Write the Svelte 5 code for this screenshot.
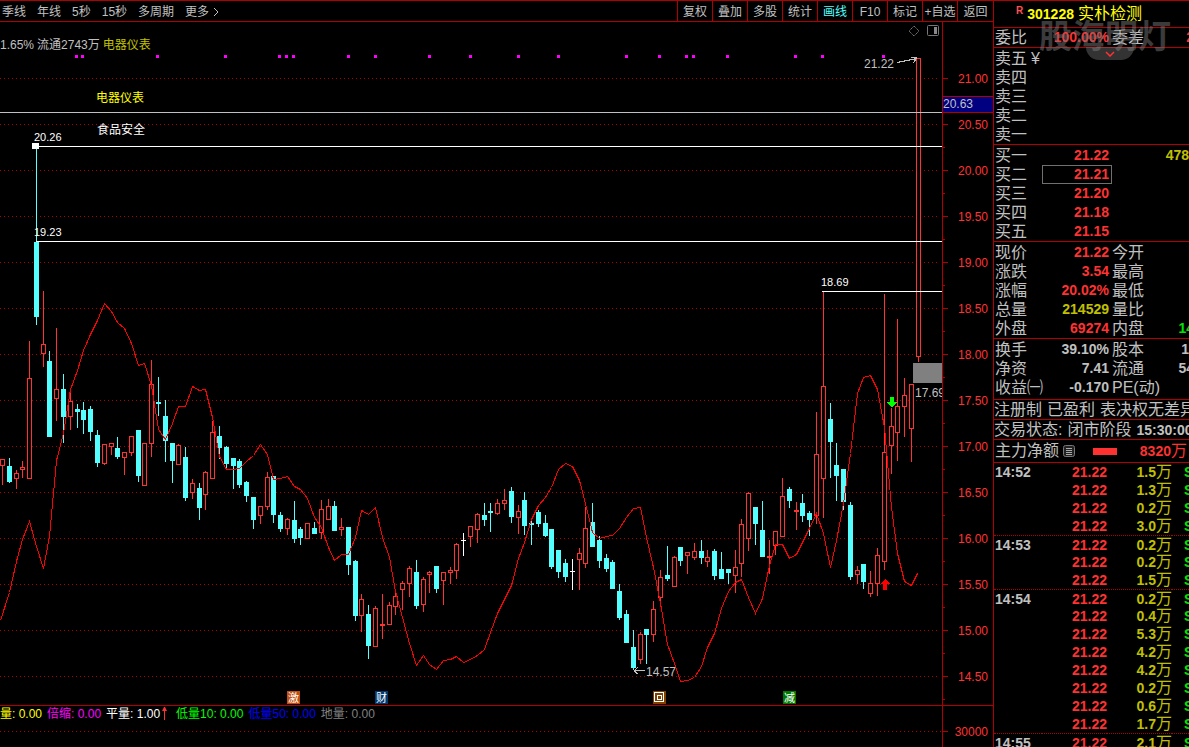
<script lang="ts">
  type Cell = { text: string; tone?: string; cut?: boolean; boxed?: boolean };
  type Row = { label: string; mark?: string; value?: Cell; label2?: string; value2?: Cell };

  const periods = ['季线', '年线', '5秒', '15秒', '多周期'];
  const tools = ['复权', '叠加', '多股', '统计', '画线', 'F10', '标记', '+自选', '返回'];
  let activeTool = $state('画线');

  const prices = Array.from({ length: 14 }, (_, i) => (21 - i * 0.5).toFixed(2));
  const gridY = prices.map((_, i) => 78 + i * 46);
  const dots = [75, 81, 156, 224, 278, 285, 292, 347, 374, 428, 469, 517, 557, 625, 658, 685, 692, 726, 794, 821, 882];

  // x, high, body top, body bottom, low, kind (u = up, d = down, w = flat)
  const candles = `
    2 459 459 466 485 u;9 458 466 482 483 d;16 470 473 479 489 u;22 461 467 470 478 u;29 341 378 479 479 u
    36 146 242 317 325 d;43 291 344 354 367 u;49 351 361 437 437 d;56 328 389 399 421 u;63 374 389 417 443 d
    70 393 401 417 430 u;77 404 409 412 428 d;83 402 410 420 434 d;90 406 409 432 441 d;97 430 435 463 467 d
    104 444 444 464 465 u;111 443 443 447 455 u;117 437 448 457 459 d;124 452 452 458 475 u;131 436 436 453 456 u
    138 430 430 476 482 d;144 443 443 486 486 u;151 360 384 444 457 u;158 377 402 404 416 d;165 400 416 441 462 d
    172 443 443 461 483 d;178 444 445 465 465 u;185 447 457 498 501 d;192 479 483 493 499 u;199 483 488 508 520 d
    205 471 472 495 510 u;212 421 432 479 479 u;219 426 436 448 459 d;226 446 447 464 469 d;233 458 458 466 489 d
    239 459 461 485 488 d;246 481 482 496 502 d;253 497 497 520 529 d;260 506 506 516 524 u;267 472 477 507 510 u
    273 476 476 515 523 d;280 512 515 529 532 d;287 518 519 529 535 u;294 501 520 539 543 d;300 527 529 538 545 d
    307 523 523 539 539 u;314 522 528 534 534 d;321 500 509 533 539 u;328 499 506 520 520 u;334 501 506 531 531 d
    341 518 527 530 536 u;348 527 527 565 575 d;355 560 561 616 621 d;361 594 599 616 632 u;368 605 614 646 659 d
    375 606 608 647 647 u;382 594 624 626 639 u;389 602 605 625 625 u;395 592 596 607 615 u;402 581 583 590 610 u
    409 566 568 584 597 u;416 560 572 606 609 d;423 577 579 605 612 u;429 571 572 575 593 u;436 566 566 589 593 d
    443 572 572 581 605 u;450 567 570 573 584 u;456 543 544 571 579 u;463 533 540 541 556 w;470 526 526 537 547 u
    477 513 514 530 543 u;484 503 515 520 526 d;490 503 511 513 532 d;497 499 503 514 515 u;504 489 500 504 510 u
    511 487 491 517 523 d;518 505 511 518 534 u;524 492 500 526 535 d;531 521 523 525 545 d;538 510 512 524 527 d
    545 515 523 536 537 d;551 529 529 567 569 d;558 550 550 572 578 d;565 559 563 577 582 d;572 559 571 572 590 w
    579 548 553 560 590 u;585 507 528 564 568 u;592 503 522 547 547 d;599 536 540 561 568 d;606 554 558 569 572 d
    612 560 562 589 589 d;619 584 591 618 620 d;626 610 614 643 643 d;633 630 647 668 670 d;640 632 634 660 664 u
    646 629 629 635 664 d;653 601 609 635 642 u;660 570 577 598 601 u;667 546 575 579 581 d;674 556 557 587 587 u
    680 547 547 561 566 d;687 552 552 556 574 u;694 543 551 558 560 u;701 540 551 558 564 d;707 550 557 562 567 u
    714 549 551 576 580 d;721 552 569 579 579 d;728 569 569 573 584 d;735 550 567 576 593 u;741 519 524 564 577 u
    748 492 493 539 551 u;755 507 507 524 545 d;762 501 530 557 557 d;769 540 556 558 574 u;775 531 531 546 555 u
    782 478 496 537 537 u;789 487 489 501 508 d;796 502 510 512 530 u;802 494 503 516 522 d;809 511 513 520 536 d
    816 412 454 516 524 u;823 292 386 479 518 u;830 403 419 442 478 d;836 443 465 476 501 d;843 469 469 502 510 d
    850 502 505 577 580 d;857 566 570 575 584 u;863 564 564 582 589 d;870 571 583 594 597 u;877 548 555 584 596 u
    884 294 452 562 570 u;891 408 426 446 474 u;897 319 406 433 461 u;904 378 395 407 437 u;911 384 384 429 462 u
    918 58 58 357 362 u`
    .trim()
    .split(/[;\n]/)
    .map((row) => {
      const [x, high, top, bottom, low, kind] = row.trim().split(' ');
      return { x: +x, high: +high, top: +top, bottom: +bottom, low: +low, kind };
    });

  const trend =
    '0,620 9,592 16,561 22,539 29,521 36,546 43,568 49,536 56,460 63,433 70,389 77,370 83,350 90,334 97,320 104,303 ' +
    '111,311 117,322 124,328 131,343 138,365 144,363 151,385 158,429 165,439 172,423 178,406 185,406 192,386 ' +
    '199,390 205,389 212,417 219,456 226,469 233,469 239,468 246,461 253,455 260,444 267,454 273,479 280,478 ' +
    '287,476 294,486 300,489 307,498 314,517 321,527 328,547 334,560 341,554 348,554 355,537 361,510 368,514 ' +
    '375,507 382,537 389,557 395,591 402,617 409,643 416,665 423,655 429,664 436,669 443,660 450,659 456,656 ' +
    '463,662 470,659 477,655 484,649 490,632 497,613 504,599 511,585 518,558 524,542 531,519 538,505 545,497 ' +
    '551,487 558,469 565,463 572,466 579,480 585,503 592,532 599,538 606,536 612,535 619,528 626,517 633,508 ' +
    '640,507 646,537 653,567 660,603 667,644 674,663 680,681 687,680 694,677 701,666 707,647 714,633 721,608 ' +
    '728,591 735,582 741,579 748,597 755,613 762,598 769,565 775,544 782,544 789,558 796,554 802,542 809,528 ' +
    '816,513 823,533 830,567 836,540 843,503 850,453 857,393 863,377 870,375 877,389 884,427 891,507 897,553 ' +
    '904,581 911,585 917,573';

  const events = [
    { x: 287, text: '激', fill: '#c05010' },
    { x: 375, text: '财', fill: '#003870' },
    { x: 653, text: '回', fill: '#804000' },
    { x: 783, text: '减', fill: '#007800' }
  ];

  const volumes = [
    { text: '量: 0.00', tone: 'bright' },
    { text: '倍缩: 0.00', tone: 'magenta' },
    { text: '平量: 1.00', tone: 'white', arrow: true },
    { text: '低量10: 0.00', tone: 'lime' },
    { text: '低量50: 0.00', tone: 'blue' },
    { text: '地量: 0.00', tone: 'dim' }
  ];

  const blocks: Row[][] = [
    [{ label: '委比', value: { text: '100.00%', tone: 'red' }, label2: '委差', value2: { text: '2', tone: 'red', cut: true } }],
    [{ label: '卖五', mark: '¥' }, { label: '卖四' }, { label: '卖三' }, { label: '卖二' }, { label: '卖一' }],
    [
      { label: '买一', value: { text: '21.22', tone: 'red' }, value2: { text: '478', tone: 'yellow' } },
      { label: '买二', value: { text: '21.21', tone: 'red', boxed: true } },
      { label: '买三', value: { text: '21.20', tone: 'red' } },
      { label: '买四', value: { text: '21.18', tone: 'red' } },
      { label: '买五', value: { text: '21.15', tone: 'red' } }
    ],
    [
      { label: '现价', value: { text: '21.22', tone: 'red' }, label2: '今开' },
      { label: '涨跌', value: { text: '3.54', tone: 'red' }, label2: '最高' },
      { label: '涨幅', value: { text: '20.02%', tone: 'red' }, label2: '最低' },
      { label: '总量', value: { text: '214529', tone: 'yellow' }, label2: '量比' },
      { label: '外盘', value: { text: '69274', tone: 'red' }, label2: '内盘', value2: { text: '14', tone: 'green', cut: true } }
    ],
    [
      { label: '换手', value: { text: '39.10%' }, label2: '股本', value2: { text: '1' } },
      { label: '净资', value: { text: '7.41' }, label2: '流通', value2: { text: '54', cut: true } },
      { label: '收益㈠', value: { text: '-0.170' }, label2: 'PE(动)' }
    ]
  ];

  const minutes = [
    { time: '14:52', trades: ['1.5', '1.3', '0.2', '3.0'] },
    { time: '14:53', trades: ['0.2', '0.2', '1.5'] },
    { time: '14:54', trades: ['0.2', '0.4', '5.3', '4.2', '4.2', '0.2', '0.6', '1.7'] },
    { time: '14:55', trades: ['2.1'] }
  ];
</script>

<div class="terminal">
  <section class="left">
    <nav class="toolbar">
      <div class="periods">
        {#each periods as period}
          <button>{period}</button>
        {/each}
        <button class="more">
          更多
          <svg width="6" height="10" viewBox="0 0 6 10"><path d="M1 1l4 4-4 4" fill="none" stroke="currentColor" /></svg>
        </button>
      </div>
      <div class="tools">
        {#each tools as tool}
          <button class:active={tool === activeTool} onclick={() => (activeTool = tool)}>{tool}</button>
        {/each}
      </div>
    </nav>

    <div class="main">
      <div class="chart">
        <svg class="kline" viewBox="0 22 942 683" preserveAspectRatio="xMaxYMin meet" shape-rendering="crispEdges">
          {#each gridY as y}
            <line class="grid" x1="0" x2="940" y1={y + 0.5} y2={y + 0.5} />
          {/each}
          {#each dots as x}
            <rect {x} y="55" width="3" height="3" fill="#f0f" />
          {/each}

          {#each candles as c}
            {#if c.kind === 'u'}
              <rect x={c.x} y={c.high} width="1" height={c.top - c.high} fill="#ff3232" />
              <rect x={c.x} y={c.bottom} width="1" height={c.low - c.bottom} fill="#ff3232" />
              <rect
                x={c.x - 1.5} y={c.top + 0.5} width="4" height={c.bottom - c.top - 1}
                fill="#000" stroke="#ff3232"
              />
            {:else}
              <rect x={c.x} y={c.high} width="1" height={c.low - c.high} fill={c.kind === 'd' ? '#54ffff' : '#fff'} />
              <rect x={c.x - 2} y={c.top} width="5" height={c.bottom - c.top} fill={c.kind === 'd' ? '#54ffff' : '#fff'} />
            {/if}
          {/each}
          <polyline points={trend} fill="none" stroke="#f00" transform="translate(0.5 0.5)" />

          <line x1="0" x2="942" y1="112.5" y2="112.5" stroke="#c0c0c0" />
          <path d="M36 146.5H942M36 241.5H942M822 291.5H942" stroke="#fff" />
          <rect x="32" y="143" width="7" height="6" fill="#fff" />
          <rect x="913" y="363" width="29" height="20" fill="#808080" />

          <path d="M890 397h4v5h3l-5 6-5-6h3z" fill="#0f0" />
          <path d="M885 579l5 5h-3v6h-4v-6h-3z" fill="#f00" />
          <path d="M897 62.500L917 58.500M911 57l6 1-4 5M634 670.500H645M638 667l-4 4 4 3" fill="none" stroke="#c0c0c0" />

          <g class="small">
            <text x="34" y="141">20.26</text>
            <text x="34" y="236">19.23</text>
            <text x="821" y="286">18.69</text>
          </g>
          <g class="quote">
            <text x="864" y="68">21.22</text>
            <text x="646" y="676">14.57</text>
            <text x="915" y="397">17.69</text>
          </g>
          <text x="96" y="102" fill="#ff0">电器仪表</text>
          <text x="97" y="134" fill="#fff">食品安全</text>

          {#each events as event}
            <rect x={event.x} y="691" width="13" height="13" fill={event.fill} />
            {#if event.text === '回'}
              <path d="M654.500 692.500h9v9h-9zM657.500 695.500h4v4h-4z" fill="none" stroke="#fff" />
            {:else}
              <text x={event.x + 1} y="702" class="event">{event.text}</text>
            {/if}
          {/each}
        </svg>
        <p class="info"><span>1.65%</span><span>流通2743万</span><span class="yellow">电器仪表</span></p>
        <div class="corner">
          <button aria-label="标注">
            <svg width="12" height="12" viewBox="0 0 12 12"><path d="M6 1l5 5-5 5-5-5z" fill="none" stroke="#777" stroke-dasharray="1.500 .5" /></svg>
          </button>
          <button aria-label="侧栏">
            <svg width="12" height="12" viewBox="0 0 12 12"><rect x=".5" y=".5" width="11" height="10" rx="1" fill="none" stroke="#777" /><path d="M7 2h3v7H7z" fill="#888" /></svg>
          </button>
        </div>
      </div>
      <div class="axis">
        <ul>
          {#each prices as price}
            <li>{price}</li>
          {/each}
        </ul>
        <span class="cursor">20.63</span>
      </div>
    </div>

    <div class="volume">
      <div class="vol-chart">
        <div class="legend">
          {#each volumes as item}
            <span class={item.tone}>{item.text}{#if item.arrow}<svg width="7" height="13" viewBox="0 0 7 13"><path d="M3 3h1v10H3zM3 0h1l2 4H1z" fill="#ff3232" /></svg>{/if}</span>
          {/each}
        </div>
        <svg class="vol-grid" width="100%" height="1"><line class="grid" x1="0" x2="100%" y1="0.5" y2="0.5" /></svg>
      </div>
      <div class="vol-axis"><span>30000</span></div>
    </div>
  </section>

  <aside class="panel">
    <header>
      <sup>R</sup>
      <b>301228</b>
      <h1>实朴检测</h1>
    </header>
    {#each blocks as block}
      <dl class="block">
        {#each block as row}
          <div class="row">
            <dt>{row.label}{#if row.mark}<i>{row.mark}</i>{/if}</dt>
            <dd class={row.value?.tone} class:boxed={row.value?.boxed}>{row.value?.text ?? ''}</dd>
            <dt>{row.label2 ?? ''}</dt>
            <dd class={row.value2?.tone} class:cut={row.value2?.cut}>{row.value2?.text ?? ''}</dd>
          </div>
        {/each}
      </dl>
    {/each}
    <p class="note"><span>注册制</span><span>已盈利</span><span>表决权无差异</span></p>
    <p class="note"><span>交易状态:</span><span>闭市阶段</span><b>15:30:00</b></p>
    <div class="flow">
      <span>主力净额</span>
      <svg width="12" height="12" viewBox="0 0 12 12">
        <rect x=".5" y=".5" width="11" height="11" rx="2" fill="#222" stroke="#777" />
        <path d="M3 3.500h6M3 5.500h6M3 7.500h6M3 9.500h6" stroke="#aaa" />
      </svg>
      <i class="bar"></i>
      <span class="red amount"><b>8320</b>万</span>
    </div>
    <table>
      {#each minutes as minute}
        <tbody>
          {#each minute.trades as trade, i}
            <tr>
              <td class="time">{i === 0 ? minute.time : ''}</td>
              <td class="price red">21.22</td>
              <td class="vol yellow"><b>{trade}</b>万</td>
              <td class="side green">S</td>
            </tr>
          {/each}
        </tbody>
      {/each}
    </table>
    <div class="watermark">股海明灯</div>
    <button class="expand" aria-label="展开">
      <svg width="10" height="6" viewBox="0 0 10 6"><path d="M1 1l4 4 4-4" fill="none" stroke="#ff3232" stroke-width="1.500" /></svg>
    </button>
  </aside>
</div>

<style>
  :global(body) {
    background: #000;
  }

  .terminal {
    --line: #b00000;
    --red: #ff3232;
    --text: #c0c0c0;
    box-sizing: border-box;
    display: grid;
    grid-template-columns: minmax(0, 1fr) 196px;
    height: 100vh;
    overflow: hidden;
    border-top: 1px solid var(--line);
    background: #000;
    color: var(--text);
    font: 400 12px/1 'Liberation Sans', 'Noto Sans CJK SC', sans-serif;
    white-space: nowrap;
  }

  button {
    padding: 0;
    border: 0;
    background: none;
    color: inherit;
    font: inherit;
    cursor: pointer;
  }

  p,
  ul,
  dl,
  dd,
  h1 {
    margin: 0;
    padding: 0;
  }

  .left {
    display: flex;
    flex-direction: column;
    min-width: 0;
  }

  .toolbar {
    display: flex;
    justify-content: space-between;
    height: 20px;
    border-bottom: 1px solid var(--line);
  }

  .toolbar button {
    padding-top: 2px;
  }

  .periods {
    display: flex;
    gap: 11px;
    padding-left: 2px;
  }

  .more {
    display: flex;
    align-items: center;
    gap: 4px;
  }

  .tools {
    display: flex;
  }

  .tools button {
    width: 35px;
    border-left: 1px solid var(--line);
  }

  .tools button:last-child {
    width: 36px;
  }

  .tools .active {
    color: #54ffff;
  }

  .main {
    display: grid;
    grid-template-columns: minmax(0, 1fr) 51px;
    height: 683px;
    border-bottom: 1px solid var(--line);
  }

  .chart {
    position: relative;
    overflow: hidden;
  }

  .kline {
    display: block;
    width: 100%;
    height: 100%;
  }

  .grid {
    stroke: var(--line);
    stroke-dasharray: 1 3;
  }

  .small {
    fill: #fff;
    font-size: 11px;
  }

  .quote {
    fill: #c0c0c0;
    font-size: 12px;
  }

  .event {
    fill: #fff;
    font-size: 11px;
  }

  .info {
    position: absolute;
    top: 17px;
    left: 0;
    display: flex;
    gap: 3px;
  }

  .corner {
    position: absolute;
    top: 3px;
    right: 3px;
    display: flex;
    gap: 7px;
  }

  .axis,
  .vol-axis {
    position: relative;
    border-left: 1px solid var(--line);
    color: var(--red);
  }

  .axis ul {
    padding-top: 33px;
    list-style: none;
  }

  .axis li {
    position: relative;
    height: 46px;
    padding-right: 5px;
    line-height: 48px;
    text-align: right;
  }

  .axis li::before,
  .axis li::after,
  .vol-axis::before {
    content: '';
    position: absolute;
    top: 23px;
    left: 0;
    width: 5px;
    height: 1px;
    background: var(--line);
  }

  .axis li::after {
    top: 46px;
    width: 2px;
  }

  .cursor {
    position: absolute;
    top: 74px;
    left: 0;
    right: 0;
    border: solid var(--line);
    border-width: 1px 0;
    background: #000080;
    color: var(--text);
    line-height: 15px;
  }

  .volume {
    display: grid;
    grid-template-columns: minmax(0, 1fr) 51px;
    flex: 1;
  }

  .legend {
    display: flex;
    gap: 5px;
    height: 25px;
    line-height: 17px;
  }

  .legend svg {
    margin: 0 3px -2px 1px;
  }

  .vol-grid {
    display: block;
  }

  .vol-axis {
    padding-right: 5px;
    line-height: 52px;
    text-align: right;
  }

  .vol-axis::before {
    top: 25px;
  }

  .panel {
    position: relative;
    overflow: hidden;
    border-left: 1px solid var(--line);
    font-size: 16px;
  }

  .panel header {
    display: flex;
    align-items: center;
    gap: 4px;
    height: 26px;
    padding-left: 22px;
    border-bottom: 1px solid var(--line);
    color: #ff0;
  }

  sup {
    align-self: flex-start;
    margin-top: 5px;
    color: #ff5050;
    font-size: 10px;
    font-weight: 700;
  }

  h1 {
    font-size: 16px;
    font-weight: 400;
  }

  .block {
    border-bottom: 1px solid var(--line);
  }

  .block + .block {
    padding-top: 1px;
  }

  .block:nth-of-type(5) {
    padding-bottom: 2px;
  }

  .row {
    display: grid;
    grid-template-columns: 47px 70px 33px minmax(0, 1fr);
    height: 19px;
    padding-left: 1px;
    line-height: 19px;
  }

  dt i {
    margin-left: 4px;
    font-style: normal;
  }

  dd {
    box-sizing: border-box;
    font-size: 14px;
    font-weight: 700;
    text-align: right;
  }

  dd:nth-of-type(1) {
    padding-right: 3px;
  }

  dd.boxed {
    margin-bottom: 1px;
    border: 1px solid #707070;
    padding-right: 2px;
    line-height: 17px;
  }

  .cut {
    margin-right: -5px;
  }

  .note {
    display: flex;
    align-items: center;
    gap: 5px;
    height: 19px;
    border-bottom: 1px solid var(--line);
  }

  b {
    font-size: 14px;
    font-weight: 700;
  }

  .flow {
    display: flex;
    align-items: center;
    gap: 4px;
    height: 22px;
    padding-left: 1px;
    border-bottom: 1px solid var(--line);
  }

  .bar {
    width: 24px;
    height: 7px;
    margin-left: 14px;
    background: var(--red);
  }

  .amount {
    margin-left: auto;
    padding-right: 2px;
  }

  table {
    width: 100%;
    border-collapse: separate;
    border-spacing: 0;
    table-layout: fixed;
  }

  td {
    box-sizing: border-box;
    height: 18px;
    padding: 0;
    font-size: 14px;
    font-weight: 700;
    line-height: 16px;
    text-align: right;
  }

  tbody + tbody tr:first-child td {
    border-top: 1px dotted var(--line);
  }

  .time {
    width: 48px;
    padding-left: 1px;
    text-align: left;
  }

  .price {
    width: 65px;
  }

  .vol {
    width: 65px;
    font-size: 16px;
    font-weight: 400;
  }

  .side {
    padding-left: 12px;
    overflow: hidden;
    text-align: left;
  }

  .watermark {
    position: absolute;
    top: 18px;
    left: 45px;
    color: #777;
    font-size: 33px;
    font-weight: 700;
    line-height: 36px;
    opacity: 0.5;
    pointer-events: none;
  }

  .expand {
    position: absolute;
    top: 46px;
    left: 92px;
    display: flex;
    align-items: center;
    justify-content: center;
    width: 48px;
    height: 13px;
    border-radius: 0 0 14px 14px;
    background: rgba(128, 128, 128, 0.4);
  }

  .red {
    color: var(--red);
  }

  .yellow {
    color: #c0c000;
  }

  .green {
    color: #00e600;
  }

  .bright {
    color: #ff0;
  }

  .magenta {
    color: #f0f;
  }

  .white {
    color: #fff;
  }

  .lime {
    color: #0f0;
  }

  .blue {
    color: #00f;
  }

  .dim {
    color: #808080;
  }
</style>
